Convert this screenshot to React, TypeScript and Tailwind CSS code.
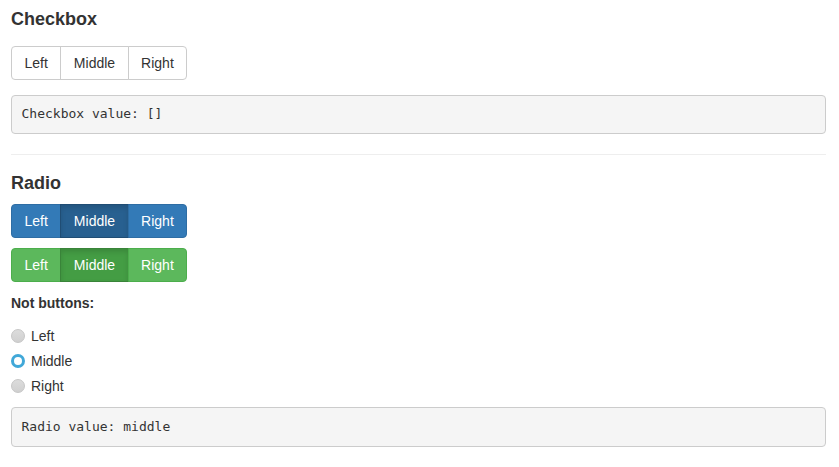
import { useState } from "react";

const sans = { fontFamily: '"Liberation Sans", Arial, sans-serif' };

type Option = { label: string; value: string };

const options: Option[] = [
  { label: "Left", value: "left" },
  { label: "Middle", value: "middle" },
  { label: "Right", value: "right" },
];

// colour sets for the bootstrap-like button groups
const variants = {
  default: {
    base: "bg-white text-[#333] border-[#ccc]",
    active: "bg-[#e6e6e6] text-[#333] border-[#adadad] shadow-[inset_0_3px_5px_rgba(0,0,0,0.125)]",
  },
  primary: {
    base: "bg-[#337ab7] text-white border-[#2e6da4]",
    active: "bg-[#286090] text-white border-[#204d74] shadow-[inset_0_3px_5px_rgba(0,0,0,0.125)]",
  },
  success: {
    base: "bg-[#5cb85c] text-white border-[#4cae4c]",
    active: "bg-[#449d44] text-white border-[#398439] shadow-[inset_0_3px_5px_rgba(0,0,0,0.125)]",
  },
};

function ButtonGroup({
  variant,
  isActive,
  onPick,
}: {
  variant: keyof typeof variants;
  isActive: (v: string) => boolean;
  onPick: (v: string) => void;
}) {
  const v = variants[variant];
  return (
    <div className="inline-flex align-middle">
      {options.map((o, i) => (
        <button
          key={o.value}
          type="button"
          onClick={() => onPick(o.value)}
          className={[
            "border px-[12.5px] py-[6px] text-[14px] leading-5",
            isActive(o.value) ? v.active : v.base,
            i === 0 ? "rounded-l-[4px]" : "-ml-px",
            i === options.length - 1 ? "rounded-r-[4px]" : "",
          ].join(" ")}
        >
          {o.label}
        </button>
      ))}
    </div>
  );
}

function Pre({ children }: { children: string }) {
  return (
    <pre
      className="block rounded-[4px] border border-[#ccc] bg-[#f5f5f5] p-[9.5px] text-[13px] leading-[18.5px] text-[#333]"
      style={{ fontFamily: '"DejaVu Sans Mono", Menlo, monospace' }}
    >
      {children}
    </pre>
  );
}

export default function App() {
  const [checked, setChecked] = useState<string[]>([]);
  const [radio, setRadio] = useState("middle");

  const toggle = (v: string) =>
    setChecked((c) => (c.includes(v) ? c.filter((x) => x !== v) : [...c, v]));

  return (
    <div className="flow-root min-h-[467px] bg-white pl-[11px] pr-[13px] text-[14px] leading-5 text-[#333]" style={sans}>
      <h4 className="mb-[10px] mt-[10px] text-[18px] font-semibold leading-[1.1] text-[#333]">Checkbox</h4>
      <div className="mt-4">
        <ButtonGroup variant="default" isActive={(v) => checked.includes(v)} onPick={toggle} />
      </div>
      <div className="mt-[15px]">
        <Pre>{`Checkbox value: [${checked.map((c) => `"${c}"`).join(",")}]`}</Pre>
      </div>

      <hr className="mb-[19px] mt-5 border-0 border-t border-[#eee]" />

      <h4 className="mb-[10px] mt-[10px] text-[18px] font-semibold leading-[1.1] text-[#333]">Radio</h4>
      <div className="mb-[10px]">
        <ButtonGroup variant="primary" isActive={(v) => v === radio} onPick={setRadio} />
      </div>
      <div className="mb-[11px]">
        <ButtonGroup variant="success" isActive={(v) => v === radio} onPick={setRadio} />
      </div>

      <div className="pb-[5px] font-bold">Not buttons:</div>
      <div className="pt-[8px]">
        {options.map((o, i) => (
          <label
            key={o.value}
            className={`flex h-5 cursor-pointer items-center ${i > 0 ? "mt-[5px]" : ""}`}
            onClick={() => setRadio(o.value)}
          >
            {radio === o.value ? (
              <span className="box-border h-[14px] w-[14px] rounded-full border-[3px] border-[#41a8d8] bg-white" />
            ) : (
              <span className="box-border h-[14px] w-[14px] rounded-full border border-[#c6c6c6] bg-gradient-to-b from-[#dcdcdc] to-[#d0d0d0]" />
            )}
            <span className="ml-[6px]">{o.label}</span>
          </label>
        ))}
      </div>
      <div className="mt-[11px]">
        <Pre>{`Radio value: ${radio}`}</Pre>
      </div>
    </div>
  );
}
